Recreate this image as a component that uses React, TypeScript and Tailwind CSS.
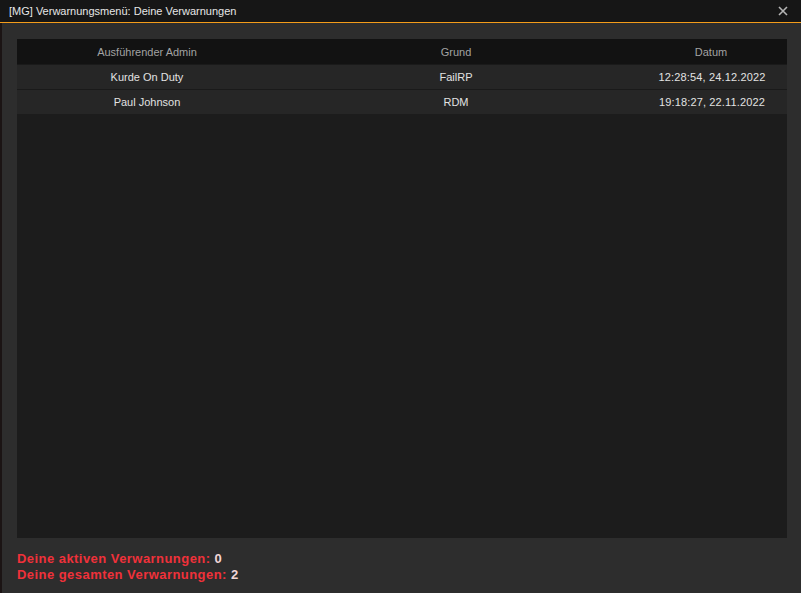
const warnings = [
  { admin: "Kurde On Duty", reason: "FailRP", date: "12:28:54, 24.12.2022" },
  { admin: "Paul Johnson", reason: "RDM", date: "19:18:27, 22.11.2022" },
];

export default function App() {
  return (
    <div
      className="flex h-[593px] w-[801px] flex-col bg-[#2d2d2d] text-[11px]"
      style={{ fontFamily: '"Liberation Sans", Arial, sans-serif' }}
    >
      {/* title bar */}
      <div className="flex h-[22px] shrink-0 items-center justify-between bg-[#161616] pl-[9px] pr-[13px] text-[#e6e6e6]">
        <span>[MG] Verwarnungsmenü: Deine Verwarnungen</span>
        <svg width="10" height="10" viewBox="0 0 10 10" aria-hidden>
          <path d="M1 1L9 9M9 1L1 9" stroke="#b5b5b5" strokeWidth="1.6" />
        </svg>
      </div>
      <div className="h-px shrink-0 bg-[#f39c1a]" />

      <div className="flex flex-1 border-l-2 border-[#1b1414]">
        <div className="flex flex-1 flex-col pl-[15px] pr-[14px] pt-[16px]">
          <div className="h-[499px] bg-[#1c1c1c]">
            <div className="grid h-[25px] grid-cols-[260px_358px_1fr] items-center bg-[#121212] pt-[2px] text-[#a3a3a3]">
              <div className="text-center">Ausführender Admin</div>
              <div className="text-center">Grund</div>
              <div className="text-center">Datum</div>
            </div>
            {warnings.map((w) => (
              <div
                key={w.date}
                className="grid h-[25px] grid-cols-[260px_358px_1fr] items-center border-t border-[#1a1a1a] bg-[#262626] pt-[1px] text-[#e2e2e2]"
              >
                <div className="text-center">{w.admin}</div>
                <div className="text-center">{w.reason}</div>
                <div className="pl-[2px] text-center tracking-[0.15px]">{w.date}</div>
              </div>
            ))}
          </div>

          <div className="mt-[13px] text-[13px] font-bold leading-[16px] tracking-[0.45px] text-[#f0313a]">
            <div>
              Deine aktiven Verwarnungen: <span className="text-[#f2d6d6]">0</span>
            </div>
            <div>
              Deine gesamten Verwarnungen: <span className="text-[#f2d6d6]">2</span>
            </div>
          </div>
        </div>
      </div>
    </div>
  );
}
